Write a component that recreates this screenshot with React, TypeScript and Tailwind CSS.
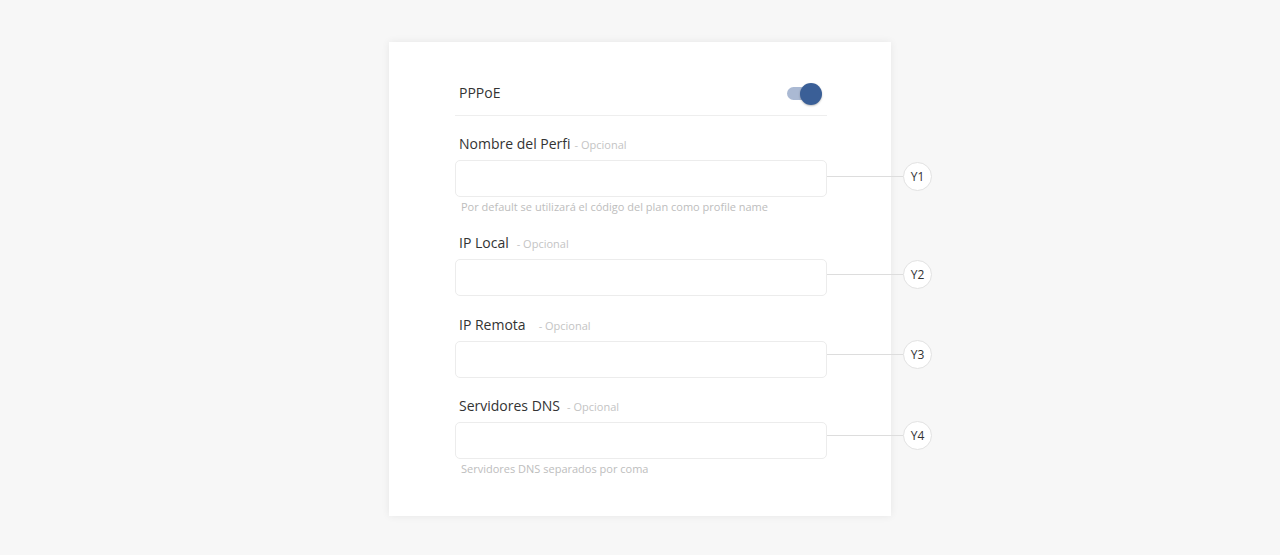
import React from 'react';

interface Field {
    tag: string;
    label: string;
    gap: string;
    top: string;
    mark: string;
    help?: string;
}

const fields: Field[] = [
    { tag: 'Y1', label: 'Nombre del Perfi', gap: 'ml-1', top: '', mark: 'top-[2px]', help: 'Por default se utilizará el código del plan como profile name' },
    { tag: 'Y2', label: 'IP Local', gap: 'ml-2', top: '', mark: 'top-px' },
    { tag: 'Y3', label: 'IP Remota', gap: 'ml-[13px]', top: 'mt-px', mark: '-top-px' },
    { tag: 'Y4', label: 'Servidores DNS', gap: 'ml-[7px]', top: '', mark: '-top-px', help: 'Servidores DNS separados por coma' },
];

function Toggle() {
    return (
        <div className="relative w-[35px] h-[22px] flex items-center">
            <div className="w-[31px] h-[13px] rounded-full bg-[#aab9d3]" />
            <div className="absolute right-0 top-0 w-[22px] h-[22px] rounded-full bg-[#3a5f97] shadow-[0_1px_2px_rgba(0,0,0,0.25)]" />
        </div>
    );
}

export default function App() {
    return (
        <div className="min-h-[555px] bg-[#f7f7f7] pt-[42px] font-['Open_Sans',sans-serif]">
            <div className="mx-auto w-[502px] bg-white shadow-[0_0_8px_rgba(0,0,0,0.07)] pt-[30px] pb-[39px] pl-[66px] pr-[64px]">
                <div className="flex items-center justify-between h-[44px] border-b border-[#eeeeee] pl-1 pr-[5px]">
                    <span className="text-[14px] text-[#333] mb-[3px]">PPPoE</span>
                    <Toggle />
                </div>

                <div className="mt-[18px] flex flex-col gap-[18px]">
                    {fields.map((f) => (
                        <div key={f.tag} className={f.top}>
                            <div className="h-5 flex items-baseline pl-1 mb-[6px]">
                                <span className="text-[14px] leading-5 text-[#333]">{f.label}</span>
                                <span className={`${f.gap} text-[11px] text-[#c4c4c4]`}>- Opcional</span>
                            </div>
                            <div className="relative">
                                <input className="block w-full h-[37px] rounded-[5px] border border-[#ececec] bg-white outline-none" />
                                <div className={`absolute left-full ${f.mark} flex items-center pointer-events-none`}>
                                    <div className="w-[76px] h-px bg-[#dddddd]" />
                                    <div className="w-[29px] h-[29px] rounded-full border border-[#e2e2e2] bg-white flex items-center justify-center text-[12px] text-[#333]">
                                        {f.tag}
                                    </div>
                                </div>
                            </div>
                            {f.help && (
                                <p className="mt-[2px] pl-[6px] text-[11px] leading-4 text-[#bdbdbd]">{f.help}</p>
                            )}
                        </div>
                    ))}
                </div>
            </div>
        </div>
    );
}
